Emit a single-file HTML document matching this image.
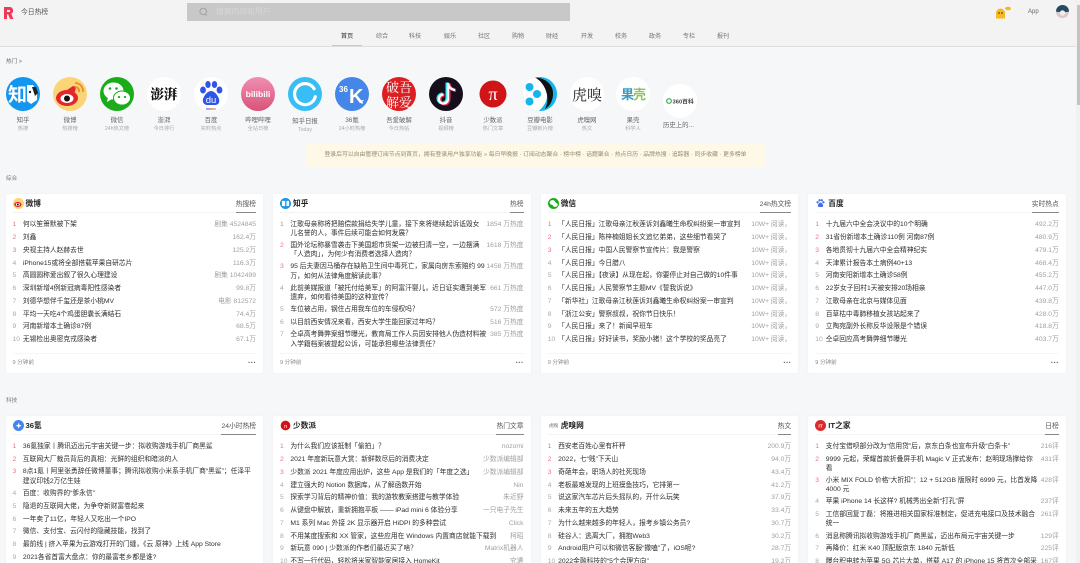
<!DOCTYPE html>
<html lang="zh"><head><meta charset="utf-8"><title>今日热榜</title>
<style>
*{box-sizing:border-box}
html,body{margin:0;padding:0;width:1080px;height:563px;overflow:hidden}
body{background:#f6f7f9}
#w{position:absolute;left:0;top:0;width:1080px;height:563px;overflow:hidden;background:#f6f7f9;font-family:"Liberation Sans","Noto Sans CJK SC",sans-serif;color:#333;font-size:6.75px;filter:blur(.25px)}
.a{position:absolute;white-space:nowrap}
#hd{position:absolute;left:0;top:0;width:1076px;height:47px;background:#f3f3f3;border-bottom:1px solid #dedede}
#sb{position:absolute;left:187px;top:3px;width:383px;height:18px;background:#c8c8c8}
.nav{position:absolute;top:31.500px;font-size:6.2px;color:#777;width:30px;text-align:center;line-height:9px}
.hot{position:absolute;top:77px;width:47px;text-align:center}
.hot svg{display:block;margin:0 auto;width:34px;height:34px}
.hot b{display:block;font-weight:400;font-size:6.4px;color:#666;line-height:8px;margin-top:5.500px;white-space:nowrap}
.hot i{display:block;font-style:normal;font-size:5.200px;color:#aaa;line-height:8px;white-space:nowrap}
.c{position:absolute;width:257.5px;background:#fff;border-radius:2px;box-shadow:0 0 3px rgba(0,0,0,.03);overflow:hidden}
.h{position:relative;height:18.5px;margin:0 7px;border-bottom:1px solid #f3f3f3}
.h svg{position:absolute;left:0;top:4px;width:11px;height:11px}
.h strong{position:absolute;left:13px;top:4px;font-size:7.7px;line-height:11px;color:#222;white-space:nowrap}
.h span{position:absolute;right:0;top:5px;height:14px;line-height:11px;font-size:6.75px;color:#555;border-bottom:1px solid #888;white-space:nowrap}
.l{margin:6px 7px 0}
.r{display:flex;padding:1.73px 0;line-height:9.33px;white-space:nowrap}
.r.d{padding:1.3px 0}
.n{flex:none;width:10.4px;color:#aaa}
.r:nth-child(1) .n,.r:nth-child(2) .n,.r:nth-child(3) .n{color:#e57583}
.t{flex:1;color:#2f2f2f;overflow:hidden}
.v{flex:none;color:#a0a0a0;text-align:right}
.f{position:absolute;left:7px;right:7px;top:159px;height:20px;border-top:1px solid #f5f5f5;font-size:5.6px;line-height:18px;color:#888}
.f u{position:absolute;right:0;top:0;text-decoration:none;font-size:8px;color:#666;font-weight:700}
</style></head><body><div id="w">

<div id="hd"></div>
<svg class="a" style="left:3px;top:7px" width="11" height="12" viewBox="0 0 11 12"><path d="M1 0h5.500a3.600 3.600 0 0 1 1.800 6.700L10.400 12H7L5.200 7.400H4V12H1z" fill="#f0385a"/><path d="M4 3v2h2.200a1 1 0 0 0 0-2z" fill="#f3f3f3"/></svg>
<div class="a" style="left:21px;top:8px;font-size:6.8px;line-height:10px;color:#555">今日热榜</div>
<div id="sb"></div>
<svg class="a" style="left:199px;top:7px" width="9" height="10" viewBox="0 0 9 10" fill="none" stroke="#999" stroke-width=".8"><circle cx="4.200" cy="4.400" r="3.300"/><path d="M6.400 7l1.400 1.600"/></svg>
<div class="a" style="left:216px;top:7px;font-size:7.8px;line-height:10px;color:#d6d6d6">搜索内容和用户</div>
<svg class="a" style="left:994px;top:6px" width="18" height="14" viewBox="0 0 18 14"><path d="M2 13V7a4.500 4.500 0 0 1 9 0v6l-1.500-1-1.500 1-1.500-1-1.500 1-1.500-1z" fill="#f6b91f"/><circle cx="5" cy="7" r=".9" fill="#6b4d00"/><circle cx="8" cy="7" r=".9" fill="#6b4d00"/><ellipse cx="14" cy="2.500" rx="3" ry="1.700" fill="#f6b91f"/></svg>
<div class="a" style="left:1028px;top:7px;font-size:6px;line-height:10px;color:#666">App</div>
<svg class="a" style="left:1056px;top:5px" width="13" height="13" viewBox="0 0 13 13"><circle cx="6.500" cy="6.500" r="6.500" fill="#d9c8c4"/><path d="M0 6.500a6.500 6.500 0 0 1 13 0l-2 .5H2z" fill="#264a63"/><circle cx="6.500" cy="8" r="2.700" fill="#eee"/></svg>

<div class="nav" style="left:332px;color:#333">首页</div>
<div class="a" style="left:332px;top:45px;width:30px;height:1px;background:#c8c8c8"></div>
<div class="nav" style="left:367px">综合</div>
<div class="nav" style="left:400px">科技</div>
<div class="nav" style="left:435px">娱乐</div>
<div class="nav" style="left:469px">社区</div>
<div class="nav" style="left:503px">购物</div>
<div class="nav" style="left:537px">财经</div>
<div class="nav" style="left:572px">开发</div>
<div class="nav" style="left:606px">校务</div>
<div class="nav" style="left:640px">政务</div>
<div class="nav" style="left:674px">专栏</div>
<div class="nav" style="left:708px">报刊</div>

<div class="a" style="left:6px;top:58px;font-size:5.6px;line-height:8px;color:#666">热门 &gt;</div>

<div class="hot" style="left:-.5px"><svg viewBox="0 0 34 34"><circle cx="17" cy="17" r="17" fill="#1296ef"/><text x="2" y="24" font-size="19" font-weight="700" fill="#fff" font-family="Noto Sans CJK SC">知</text><path d="M21 8h6l4 7v8l-6 4-4-3z" fill="#fff"/><path d="M26 10h4l2 6-3 3z" fill="#222"/><circle cx="24" cy="15" r="1.200" fill="#222"/></svg><b>知乎</b><i>热搜</i></div>
<div class="hot" style="left:46.5px"><svg viewBox="0 0 34 34"><circle cx="17" cy="17" r="17" fill="#fbd476"/><ellipse cx="14" cy="21" rx="11" ry="8" fill="#e4262d"/><path d="M14 13l6-4 3 1-1 5z" fill="#e4262d"/><ellipse cx="14" cy="21.500" rx="6.500" ry="4.500" fill="#fff"/><circle cx="14" cy="21.500" r="3" fill="#111"/><path d="M22 6a8 8 0 0 1 8 9M22 10a4 4 0 0 1 4 5" fill="none" stroke="#ef8a2d" stroke-width="1.800"/></svg><b>微博</b><i>热搜榜</i></div>
<div class="hot" style="left:93.5px"><svg viewBox="0 0 34 34"><circle cx="17" cy="17" r="17" fill="#1aad19"/><ellipse cx="13.500" cy="14" rx="10" ry="8.500" fill="#fff"/><path d="M8 20l-1 5 5-3z" fill="#fff"/><ellipse cx="22" cy="21" rx="8.500" ry="7" fill="#fff" stroke="#1aad19"/><circle cx="10" cy="11.500" r="1.300" fill="#1aad19"/><circle cx="16.500" cy="11.500" r="1.300" fill="#1aad19"/><circle cx="19" cy="20" r="1.100" fill="#1aad19"/><circle cx="25" cy="20" r="1.100" fill="#1aad19"/></svg><b>微信</b><i>24h热文榜</i></div>
<div class="hot" style="left:140.5px"><svg viewBox="0 0 34 34"><circle cx="17" cy="17" r="17" fill="#fff"/><text x="17" y="22" text-anchor="middle" font-size="13.500" font-weight="900" fill="#111" font-family="Noto Serif CJK SC">澎湃</text></svg><b>澎湃</b><i>今日排行</i></div>
<div class="hot" style="left:187.5px"><svg viewBox="0 0 34 34"><circle cx="17" cy="17" r="17" fill="#fff"/><path d="M17 14c-4 0-7 5-8 8-1 4 2 6 4 6h8c3 0 5-2 4-6-1-3-4-8-8-8z" fill="#2f55e6"/><ellipse cx="9" cy="13" rx="2.900" ry="3.500" fill="#2f55e6"/><ellipse cx="14" cy="7.500" rx="2.700" ry="3.500" fill="#2f55e6"/><ellipse cx="20.500" cy="7.500" rx="2.700" ry="3.500" fill="#2f55e6"/><ellipse cx="25.500" cy="13" rx="2.900" ry="3.500" fill="#2f55e6"/><text x="17" y="26" text-anchor="middle" font-size="9.500" fill="#fff">du</text><path d="M12 32h4" stroke="#2f55e6"/><path d="M16 32h3" stroke="#e8392e"/><path d="M19 32h3" stroke="#888"/></svg><b>百度</b><i>实时热点</i></div>
<div class="hot" style="left:234.5px"><svg viewBox="0 0 34 34"><defs><linearGradient id="bg" x1="0" y1="0" x2="0" y2="1"><stop offset="0" stop-color="#f08fb2"/><stop offset="1" stop-color="#d85378"/></linearGradient></defs><circle cx="17" cy="17" r="17" fill="url(#bg)"/><text x="17" y="20" text-anchor="middle" font-size="8.600" font-weight="700" fill="#fff">bilibili</text></svg><b>哔哩哔哩</b><i>全站日榜</i></div>
<div class="hot" style="left:281.5px"><svg viewBox="0 0 34 34"><circle cx="17" cy="17" r="17" fill="#38bdf5"/><path d="M24.500 9.500a10.500 10.500 0 1 1-7.500-3" fill="none" stroke="#fff" stroke-width="3.200" stroke-linecap="round" transform="rotate(60 17 17)"/></svg><b style="margin-top:6.500px">知乎日报</b><i>Today</i></div>
<div class="hot" style="left:328.5px"><svg viewBox="0 0 34 34"><circle cx="17" cy="17" r="17" fill="#4587e8"/><text x="4" y="15" font-size="8" font-weight="700" fill="#fff">36</text><text x="14" y="26" font-size="20" font-weight="700" fill="#fff">K</text><text x="26" y="27" font-size="7" font-weight="700" fill="#fff">r</text></svg><b>36氪</b><i>24小时热榜</i></div>
<div class="hot" style="left:375.5px"><svg viewBox="0 0 34 34"><circle cx="17" cy="17" r="17" fill="#dc1f22"/><text x="17" y="15" text-anchor="middle" font-size="13" fill="#fff" font-family="Noto Serif CJK SC">破吾</text><text x="17" y="30" text-anchor="middle" font-size="13" fill="#fff" font-family="Noto Serif CJK SC">解爱</text></svg><b>吾爱破解</b><i>今日热帖</i></div>
<div class="hot" style="left:422.5px"><svg viewBox="0 0 34 34"><circle cx="17" cy="17" r="17" fill="#160f1b"/><path d="M19 6v16a4.500 4.500 0 1 1-4.500-4.500M19 6c.5 4 3 6.500 7 7" fill="none" stroke="#25f4ee" stroke-width="3" transform="translate(-1 -.5)"/><path d="M19 6v16a4.500 4.500 0 1 1-4.500-4.500M19 6c.5 4 3 6.500 7 7" fill="none" stroke="#fe2c55" stroke-width="3" transform="translate(1 .5)"/><path d="M19 6v16a4.500 4.500 0 1 1-4.500-4.500M19 6c.5 4 3 6.500 7 7" fill="none" stroke="#fff" stroke-width="2.200"/></svg><b>抖音</b><i>视频榜</i></div>
<div class="hot" style="left:469.5px"><svg viewBox="0 0 34 34"><circle cx="17" cy="17" r="13.500" fill="#cf1518"/><text x="17" y="23" text-anchor="middle" font-size="18" fill="#fff" font-family="Liberation Serif">π</text></svg><b>少数派</b><i>热门文章</i></div>
<div class="hot" style="left:516.5px"><svg viewBox="0 0 34 34"><circle cx="17" cy="17" r="17" fill="#14b5ea"/><path d="M12 .5C22 5 25 12 24 20c-.5 5-3 9-8 13.900C7 33.500 0 26 0 17 0 8 5 2 12 .5z" fill="#fff"/><path d="M12 .5C20 .500 31 6 30 18c-.5 6-3 11-8 14 3-6 3-12 1-18C21 8 17 3 12 .5z" fill="#111"/><circle cx="6.500" cy="10" r="4" fill="#14b5ea"/><circle cx="14" cy="17" r="4" fill="#14b5ea"/><circle cx="6.500" cy="24.500" r="4" fill="#14b5ea"/></svg><b>豆瓣电影</b><i>豆瓣新片榜</i></div>
<div class="hot" style="left:563.5px"><svg viewBox="0 0 34 34"><circle cx="17" cy="17" r="17" fill="#fff"/><text x="17" y="23" text-anchor="middle" font-size="15" fill="#222" font-family="Noto Serif CJK SC">虎嗅</text></svg><b>虎嗅网</b><i>热文</i></div>
<div class="hot" style="left:609.500px"><svg viewBox="0 0 34 34"><circle cx="17" cy="17" r="17" fill="#fff"/><text x="5" y="22" font-size="13" font-weight="700" fill="#3b9bc4">果</text><text x="17" y="22" font-size="13" font-weight="700" fill="#8dc555">壳</text></svg><b>果壳</b><i>科学人</i></div>
<div class="a" style="left:663px;top:84px;width:34px;height:34px;border-radius:50%;background:#fff"></div>
<svg class="a" style="left:663px;top:84px" width="34" height="34" viewBox="0 0 34 34"><circle cx="6" cy="17" r="2.300" fill="none" stroke="#3ba84a" stroke-width="1.200"/><text x="9.500" y="19.300" font-size="5.800" font-weight="700" fill="#444">360百科</text></svg>
<div class="a" style="left:663px;top:122px;font-size:6.4px;line-height:8px;color:#666">历史上的...</div>

<div class="a" style="left:306px;top:144px;width:459px;height:23px;background:#fdf8e8;border-radius:2px;text-align:center;font-size:5.850px;line-height:23px;color:#98896a">登录后可以自由管理订阅节点到首页，拥有登录用户独享功能 » 每日早晚报 · 订阅动态聚合 · 榜中榜 · 话题聚合 · 热点日历 · 品牌热搜 · 追踪器 · 同步收藏 · 更多榜单</div>

<div class="a" style="left:6px;top:175px;font-size:5.600px;line-height:8px;color:#777">综合</div>
<div class="a" style="left:6px;top:397px;font-size:5.600px;line-height:8px;color:#777">科技</div>

<!-- Row 1 -->
<div class="c" style="left:5.500px;top:194px;height:179px">
<div class="h"><svg viewBox="0 0 34 34"><circle cx="17" cy="17" r="17" fill="#fbd476"/><ellipse cx="15" cy="20" rx="11" ry="8" fill="#e4262d"/><ellipse cx="15" cy="20" rx="6" ry="4.500" fill="#fff"/><circle cx="15" cy="20" r="3" fill="#111"/></svg><strong>微博</strong><span>热搜榜</span></div>
<div class="l">
<div class="r"><div class="n">1</div><div class="t">何以笙箫默被下架</div><div class="v">剧集 4524845</div></div>
<div class="r"><div class="n">2</div><div class="t">刘鑫</div><div class="v">162.4万</div></div>
<div class="r"><div class="n">3</div><div class="t">央视主持人赵赫去世</div><div class="v">125.2万</div></div>
<div class="r"><div class="n">4</div><div class="t">iPhone15或将全部搭载苹果自研芯片</div><div class="v">116.3万</div></div>
<div class="r"><div class="n">5</div><div class="t">高圆圆称爱出叙了很久心理建设</div><div class="v">剧集 1042499</div></div>
<div class="r"><div class="n">6</div><div class="t">深圳新增4例新冠病毒阳性感染者</div><div class="v">99.8万</div></div>
<div class="r"><div class="n">7</div><div class="t">刘德华想伴千玺还是茶小桃MV</div><div class="v">电影 812572</div></div>
<div class="r"><div class="n">8</div><div class="t">平均一天吃4个鸡蛋胆囊长满结石</div><div class="v">74.4万</div></div>
<div class="r"><div class="n">9</div><div class="t">河南新增本土确诊87例</div><div class="v">68.5万</div></div>
<div class="r"><div class="n">10</div><div class="t">无锡检出奥密克戎感染者</div><div class="v">67.1万</div></div>
</div>
<div class="f">9 分钟前<u>···</u></div></div>

<div class="c" style="left:273px;top:194px;height:179px">
<div class="h"><svg viewBox="0 0 34 34"><circle cx="17" cy="17" r="17" fill="#1296ef"/><path d="M6 9h10v16H6zM20 9h8v16h-8z" fill="#fff"/></svg><strong>知乎</strong><span>热榜</span></div>
<div class="l">
<div class="r d"><div class="n">1</div><div class="t">江歌母亲称将把赔偿款捐给失学儿童，接下来将继续起诉诋毁女<br>儿名誉的人，事件后续可能会如何发展？</div><div class="v">1854 万热度</div></div>
<div class="r d"><div class="n">2</div><div class="t">国外论坛称暴雪袭击下美国超市货架一边被扫清一空，一边摆满<br>「人造肉」，为何少有消费者选择人造肉？</div><div class="v">1618 万热度</div></div>
<div class="r d"><div class="n">3</div><div class="t">95 后夫妻因马桶存在缺陷卫生间中毒死亡，家属向房东索赔约 99<br>万，如何从法律角度解读此事？</div><div class="v">1458 万热度</div></div>
<div class="r d"><div class="n">4</div><div class="t">此前美媒报道「被托付给美军」的阿富汗婴儿，近日证实遭到美军<br>遗弃，如何看待美国的这种宣传？</div><div class="v">661 万热度</div></div>
<div class="r"><div class="n">5</div><div class="t">车位被占用，钢住占用我车位的车侵权吗？</div><div class="v">572 万热度</div></div>
<div class="r"><div class="n">6</div><div class="t">以目前西安情况来看，西安大学生能回家过年吗？</div><div class="v">516 万热度</div></div>
<div class="r d"><div class="n">7</div><div class="t">仝卓高考舞弊案细节曝光，教育局工作人员因安排他人伪造材料被<br>入学籍档案被提起公诉，可能承担哪些法律责任？</div><div class="v">385 万热度</div></div>
</div>
<div class="f">9 分钟前<u>···</u></div></div>

<div class="c" style="left:540.700px;top:194px;height:179px">
<div class="h"><svg viewBox="0 0 34 34"><circle cx="17" cy="17" r="17" fill="#1aad19"/><ellipse cx="14" cy="14" rx="9" ry="7.500" fill="#fff"/><ellipse cx="22" cy="21" rx="8" ry="6.500" fill="#fff"/></svg><strong>微信</strong><span>24h热文榜</span></div>
<div class="l">
<div class="r"><div class="n">1</div><div class="t">「人民日报」江歌母亲江秋莲诉刘鑫曦生命权纠纷案一审宣判</div><div class="v">10W+ 阅读，</div></div>
<div class="r"><div class="n">2</div><div class="t">「人民日报」陈梓楠姐姐长文追忆弟弟，这些细节看哭了</div><div class="v">10W+ 阅读，</div></div>
<div class="r"><div class="n">3</div><div class="t">「人民日报」中国人民警察节宣传片：我是警察</div><div class="v">10W+ 阅读，</div></div>
<div class="r"><div class="n">4</div><div class="t">「人民日报」今日腊八</div><div class="v">10W+ 阅读，</div></div>
<div class="r"><div class="n">5</div><div class="t">「人民日报」【夜读】从现在起，你要停止对自己做的10件事</div><div class="v">10W+ 阅读，</div></div>
<div class="r"><div class="n">6</div><div class="t">「人民日报」人民警察节主题MV《誓我诉说》</div><div class="v">10W+ 阅读，</div></div>
<div class="r"><div class="n">7</div><div class="t">「新华社」江歌母亲江秋莲诉刘鑫曦生命权纠纷案一审宣判</div><div class="v">10W+ 阅读，</div></div>
<div class="r"><div class="n">8</div><div class="t">「浙江公安」警察叔叔，祝你节日快乐！</div><div class="v">10W+ 阅读，</div></div>
<div class="r"><div class="n">9</div><div class="t">「人民日报」来了！新闻早班车</div><div class="v">10W+ 阅读，</div></div>
<div class="r"><div class="n">10</div><div class="t">「人民日报」好好读书，奖励小猪！这个学校的奖品亮了</div><div class="v">10W+ 阅读，</div></div>
</div>
<div class="f">9 分钟前<u>···</u></div></div>

<div class="c" style="left:808.300px;top:194px;height:179px">
<div class="h"><svg viewBox="0 0 34 34"><circle cx="17" cy="17" r="17" fill="#fff"/><path d="M17 14c-4 0-7 5-8 8-1 4 2 6 4 6h8c3 0 5-2 4-6-1-3-4-8-8-8z" fill="#4a6ee6"/><circle cx="8" cy="13" r="3.500" fill="#4a6ee6"/><circle cx="14" cy="7" r="3.500" fill="#4a6ee6"/><circle cx="21" cy="7" r="3.500" fill="#4a6ee6"/><circle cx="26" cy="13" r="3.500" fill="#4a6ee6"/></svg><strong>百度</strong><span>实时热点</span></div>
<div class="l">
<div class="r"><div class="n">1</div><div class="t">十九届六中全会决议中的10个明确</div><div class="v">492.2万</div></div>
<div class="r"><div class="n">2</div><div class="t">31省份新增本土确诊110例 河南87例</div><div class="v">480.9万</div></div>
<div class="r"><div class="n">3</div><div class="t">各地贯彻十九届六中全会精神纪实</div><div class="v">479.1万</div></div>
<div class="r"><div class="n">4</div><div class="t">天津累计报告本土病例40+13</div><div class="v">468.4万</div></div>
<div class="r"><div class="n">5</div><div class="t">河南安阳新增本土确诊58例</div><div class="v">455.2万</div></div>
<div class="r"><div class="n">6</div><div class="t">22岁女子回村1天被安排20场相亲</div><div class="v">447.0万</div></div>
<div class="r"><div class="n">7</div><div class="t">江歌母亲在北京与媒体见面</div><div class="v">439.8万</div></div>
<div class="r"><div class="n">8</div><div class="t">百草枯中毒肺移植女孩站起来了</div><div class="v">428.0万</div></div>
<div class="r"><div class="n">9</div><div class="t">立陶宛副外长称反华设限是个错误</div><div class="v">418.8万</div></div>
<div class="r"><div class="n">10</div><div class="t">仝卓回应高考舞弊细节曝光</div><div class="v">403.7万</div></div>
</div>
<div class="f">9 分钟前<u>···</u></div></div>

<!-- Row 2 -->
<div class="c" style="left:5.500px;top:416px;height:160px">
<div class="h"><svg viewBox="0 0 34 34"><circle cx="17" cy="17" r="17" fill="#4587e8"/><path d="M8 18l7-3 3-7 2 7 7 3-7 2-2 7-3-7z" fill="#fff"/></svg><strong>36氪</strong><span>24小时热榜</span></div>
<div class="l">
<div class="r"><div class="n">1</div><div class="t">36氪独家丨腾讯迈出元宇宙关键一步：拟收购游戏手机厂商黑鲨</div></div>
<div class="r"><div class="n">2</div><div class="t">互联网大厂裁员背后的真相：光鲜的组织和暗淡的人</div></div>
<div class="r d"><div class="n">3</div><div class="t">8点1氪丨阿里张勇辞任微博董事；腾讯拟收购小米系手机厂商“黑鲨”；任泽平<br>建议印钱2万亿生娃</div></div>
<div class="r"><div class="n">4</div><div class="t">百度：收购界的“爹永信”</div></div>
<div class="r"><div class="n">5</div><div class="t">隐退的互联网大佬，为争夺新财富卷起来</div></div>
<div class="r"><div class="n">6</div><div class="t">一年卖了11亿，年轻人又吃出一个IPO</div></div>
<div class="r"><div class="n">7</div><div class="t">微信、支付宝、云闪付的隐藏技能，找到了</div></div>
<div class="r"><div class="n">8</div><div class="t">最前线 | 挤入苹果为云游戏打开的门缝，《云 原神》上线 App Store</div></div>
<div class="r"><div class="n">9</div><div class="t">2021各省首富大盘点：你的最富老乡都是谁?</div></div>
</div></div>

<div class="c" style="left:273px;top:416px;height:160px">
<div class="h"><svg viewBox="0 0 34 34"><circle cx="17" cy="17" r="15" fill="#cf1518"/><text x="17" y="24" text-anchor="middle" font-size="20" fill="#fff" font-family="Liberation Serif">π</text></svg><strong>少数派</strong><span>热门文章</span></div>
<div class="l">
<div class="r"><div class="n">1</div><div class="t">为什么我们应该抵制「偷拍」？</div><div class="v">nozomi</div></div>
<div class="r"><div class="n">2</div><div class="t">2021 年度新玩意大赏：新鲜数尽后的消费决定</div><div class="v">少数派编辑部</div></div>
<div class="r"><div class="n">3</div><div class="t">少数派 2021 年度应用出炉，这些 App 是我们的「年度之选」</div><div class="v">少数派编辑部</div></div>
<div class="r"><div class="n">4</div><div class="t">建立强大的 Notion 数据库，从了解函数开始</div><div class="v">Nin</div></div>
<div class="r"><div class="n">5</div><div class="t">探索学习背后的精神价值：我的游牧教案搭建与教学体验</div><div class="v">朱近野</div></div>
<div class="r"><div class="n">6</div><div class="t">从键盘中解放，重新拥抱平板 —— iPad mini 6 体验分享</div><div class="v">一只电子先生</div></div>
<div class="r"><div class="n">7</div><div class="t">M1 系列 Mac 外接 2K 显示器开启 HiDPI 的多种尝试</div><div class="v">Click</div></div>
<div class="r"><div class="n">8</div><div class="t">不用某度搜索和 XX 管家，这些应用在 Windows 内置商店就能下载到</div><div class="v">柯昭</div></div>
<div class="r"><div class="n">9</div><div class="t">新玩意 090 | 少数派的作者们最近买了啥？</div><div class="v">Matrix机器人</div></div>
<div class="r"><div class="n">10</div><div class="t">不写一行代码，轻松将米家智能家居接入 HomeKit</div><div class="v">究遭</div></div>
</div></div>

<div class="c" style="left:540.700px;top:416px;height:160px">
<div class="h"><svg viewBox="0 0 34 34"><text x="17" y="22" text-anchor="middle" font-size="14" fill="#333" font-family="Noto Serif CJK SC">虎嗅</text></svg><strong>虎嗅网</strong><span>热文</span></div>
<div class="l">
<div class="r"><div class="n">1</div><div class="t">西安老百姓心里有杆秤</div><div class="v">200.9万</div></div>
<div class="r"><div class="n">2</div><div class="t">2022，七“贱”下天山</div><div class="v">94.0万</div></div>
<div class="r"><div class="n">3</div><div class="t">奇葩年会，职场人的社死现场</div><div class="v">43.4万</div></div>
<div class="r"><div class="n">4</div><div class="t">老板最难发现的上班摸鱼技巧，它排第一</div><div class="v">41.2万</div></div>
<div class="r"><div class="n">5</div><div class="t">说这家汽车芯片后头摇队的，开什么玩笑</div><div class="v">37.9万</div></div>
<div class="r"><div class="n">6</div><div class="t">未来五年的五大趋势</div><div class="v">33.4万</div></div>
<div class="r"><div class="n">7</div><div class="t">为什么越来越多的年轻人，报考乡镇公务员?</div><div class="v">30.7万</div></div>
<div class="r"><div class="n">8</div><div class="t">硅谷人：逃离大厂，拥抱Web3</div><div class="v">30.2万</div></div>
<div class="r"><div class="n">9</div><div class="t">Android用户可以和微信客服“撒嗑”了，iOS呢?</div><div class="v">28.7万</div></div>
<div class="r"><div class="n">10</div><div class="t">2022金融科技的“5个会理方向”</div><div class="v">19.2万</div></div>
</div></div>

<div class="c" style="left:808.300px;top:416px;height:160px">
<div class="h"><svg viewBox="0 0 34 34"><circle cx="17" cy="17" r="17" fill="#d92b2b"/><text x="17" y="23" text-anchor="middle" font-size="15" font-weight="700" fill="#fff">IT</text></svg><strong>IT之家</strong><span>日榜</span></div>
<div class="l">
<div class="r"><div class="n">1</div><div class="t">支付宝借呗部分改为“信用贷”后，京东白条也宣布升级“白条卡”</div><div class="v">216评</div></div>
<div class="r d"><div class="n">2</div><div class="t">9999 元起，荣耀首款折叠屏手机 Magic V 正式发布：赵明现场撑给你<br>看</div><div class="v">431评</div></div>
<div class="r d"><div class="n">3</div><div class="t">小米 MIX FOLD 价格“大折扣”：12 + 512GB 版限时 6999 元，比首发降<br>4000 元</div><div class="v">428评</div></div>
<div class="r"><div class="n">4</div><div class="t">苹果 iPhone 14 长这样? 机械秀出全新“打孔”屏</div><div class="v">237评</div></div>
<div class="r d"><div class="n">5</div><div class="t">工信部回复丁磊：将推进相关国家标准制定，促进充电接口及技术融合<br>统一</div><div class="v">261评</div></div>
<div class="r"><div class="n">6</div><div class="t">消息称腾讯拟收购游戏手机厂商黑鲨，迈出布局元宇宙关键一步</div><div class="v">129评</div></div>
<div class="r"><div class="n">7</div><div class="t">再降价：红米 K40 顶配版京东 1840 元新低</div><div class="v">225评</div></div>
<div class="r"><div class="n">8</div><div class="t">曝台积电转为苹果 5G 芯片大单，搭载 A17 的 iPhone 15 将首次全部采</div><div class="v">167评</div></div>
</div></div>

<div class="a" style="left:1076px;top:0;width:4px;height:563px;background:#f1f1f1"></div>
<div class="a" style="left:1077px;top:5px;width:3px;height:100px;background:#c4c4c4"></div>
</div></body></html>
